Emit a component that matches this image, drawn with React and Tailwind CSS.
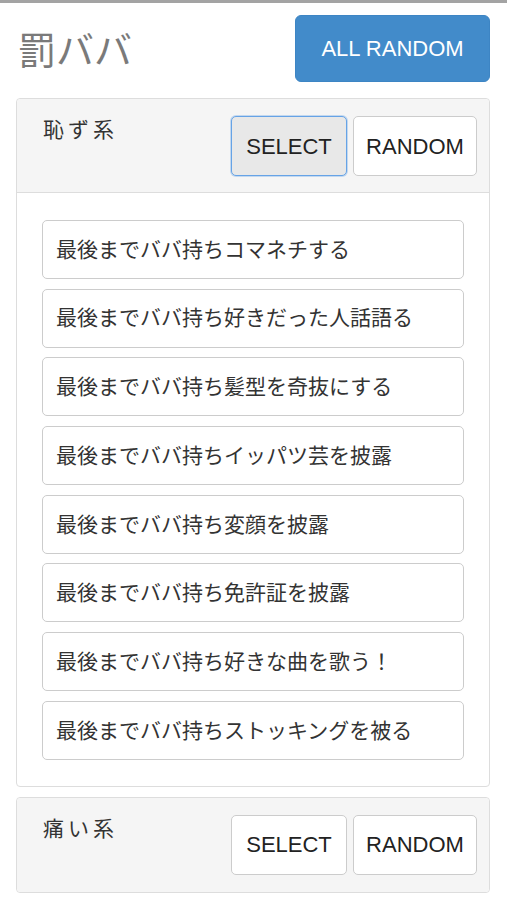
import React, { useState } from 'react';

const JP = "font-['Liberation_Sans','Noto_Sans_CJK_JP',sans-serif]";

const groups = [
    {
        name: '恥ず系',
        items: [
            '最後までババ持ちコマネチする',
            '最後までババ持ち好きだった人話語る',
            '最後までババ持ち髪型を奇抜にする',
            '最後までババ持ちイッパツ芸を披露',
            '最後までババ持ち変顔を披露',
            '最後までババ持ち免許証を披露',
            '最後までババ持ち好きな曲を歌う！',
            '最後までババ持ちストッキングを被る',
        ],
    },
    { name: '痛い系', items: [] },
];

const Panel = ({ group, open, onSelect }) => (
    <div className="border border-[#ddd] rounded-[4px] bg-white">
        <div className={`flex items-start justify-between bg-[#f5f5f5] h-[94px] pt-[17px] pl-[26px] pr-[12px] rounded-t-[4px] ${open ? 'border-b border-[#ddd]' : 'rounded-b-[4px]'}`}>
            <span className="text-[21px] leading-[26px] tracking-[4px] text-[#333] pt-[1px]">{group.name}</span>
            <div className="flex gap-[6px]">
                <button
                    onClick={onSelect}
                    className={`w-[116px] h-[60px] rounded-[5px] border text-[22px] text-[#222] ${open ? 'bg-[#e8e8e8] border-[#66a3e6] shadow-[0_0_0_1px_rgba(102,163,230,0.35)]' : 'bg-white border-[#ccc]'}`}
                >
                    SELECT
                </button>
                <button className="w-[124px] h-[60px] rounded-[5px] border border-[#ccc] bg-white text-[22px] text-[#222]">
                    RANDOM
                </button>
            </div>
        </div>
        {open && (
            <div className="flex flex-col gap-[9.7px] px-[25px] pt-[27px] pb-[26px]">
                {group.items.map((item) => (
                    <div key={item} className="h-[59px] flex items-center pl-[13px] border border-[#ccc] rounded-[5px] text-[21px] text-[#333]">
                        {item}
                    </div>
                ))}
            </div>
        )}
    </div>
);

const App = () => {
    const [open, setOpen] = useState(0);

    return (
        <div className={`${JP} bg-white min-h-[900px] border-t-[3px] border-[#a3a3a3]`}>
            <div className="pl-[16px] pr-[17px]">
                <div className="flex items-center justify-between pt-[12px] pb-[16px]">
                    <h1 className="text-[38px] leading-none text-[#7a7a7a] pl-[2px] pt-[4px]">罰ババ</h1>
                    <button className="w-[195px] h-[67px] rounded-[6px] bg-[#428bca] border border-[#3d85c4] text-white text-[22px]">
                        ALL RANDOM
                    </button>
                </div>
                <div className="flex flex-col gap-[10px]">
                    {groups.map((g, i) => (
                        <Panel key={g.name} group={g} open={open === i} onSelect={() => setOpen(open === i ? -1 : i)} />
                    ))}
                </div>
            </div>
        </div>
    );
};

export default App;
